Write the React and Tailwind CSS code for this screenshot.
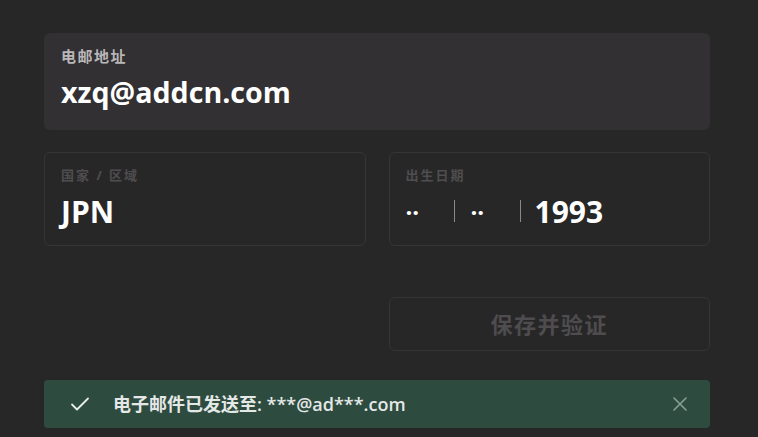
import React from "react";

const font = {
  fontFamily: '"Open Sans", "Noto Sans", "Noto Sans CJK SC", sans-serif',
};

function Field({ label, children }) {
  return (
    <div className="h-[94px] rounded-md border border-[#363436] px-[16px] pt-[14px]">
      <div className="text-[13px] leading-[16px] font-bold tracking-[2px] text-[#4f4d4f]">{label}</div>
      <div className="mt-[13px] flex items-center h-[30px]">{children}</div>
    </div>
  );
}

export default function App() {
  return (
    <div className="min-h-screen w-full bg-[#282728] pt-[33px]" style={font}>
      <div className="ml-[44px] w-[666px]">
        {/* email */}
        <div className="h-[97px] rounded-md bg-[#323032] px-[17px] pt-[14px]">
          <div className="text-[15px] leading-[18px] font-bold tracking-[1.5px] text-[#b9b7b9]">电邮地址</div>
          <div className="mt-[9px] text-[28.6px] leading-[36px] font-bold text-white">
            xzq@addcn.com
          </div>
        </div>

        <div className="mt-[22px] grid grid-cols-2 gap-[23px]">
          <Field label="国家 / 区域">
            <span className="text-[30px] font-bold text-white">JPN</span>
          </Field>
          <Field label="出生日期">
            <span className="w-[48px] text-[24px] font-bold text-white leading-none -mt-[10px]">..</span>
            <span className="h-[22px] w-px bg-[#8a888a]" />
            <span className="ml-[16px] w-[49px] text-[24px] font-bold text-white leading-none -mt-[10px]">..</span>
            <span className="h-[22px] w-px bg-[#8a888a]" />
            <span className="ml-[14px] text-[30px] font-bold text-white">1993</span>
          </Field>
        </div>

        <div className="mt-[51px] grid grid-cols-2 gap-[23px]">
          <div />
          <button className="h-[54px] rounded-md border border-[#363436] text-[22px] font-bold text-[#4e4c4e] tracking-[1.5px]">
            保存并验证
          </button>
        </div>

        <div className="mt-[29px] flex h-[48px] items-center rounded-sm bg-[#2e4b40] pl-[26px] pr-[22px]">
          <svg width="20" height="20" viewBox="0 0 20 20" fill="none" stroke="#e8ecea" strokeWidth="1.8" strokeLinecap="round" strokeLinejoin="round">
            <path d="M2 10.5 L7 15.5 L18 4.5" />
          </svg>
          <span className="ml-[23px] text-[18px] font-semibold text-[#e4e8e6]">
            电子邮件已发送至: ***@ad***.com
          </span>
          <svg className="ml-auto" width="16" height="16" viewBox="0 0 16 16" fill="none" stroke="#87a096" strokeWidth="1.6" strokeLinecap="round">
            <path d="M2 2 L14 14 M14 2 L2 14" />
          </svg>
        </div>
      </div>
    </div>
  );
}
